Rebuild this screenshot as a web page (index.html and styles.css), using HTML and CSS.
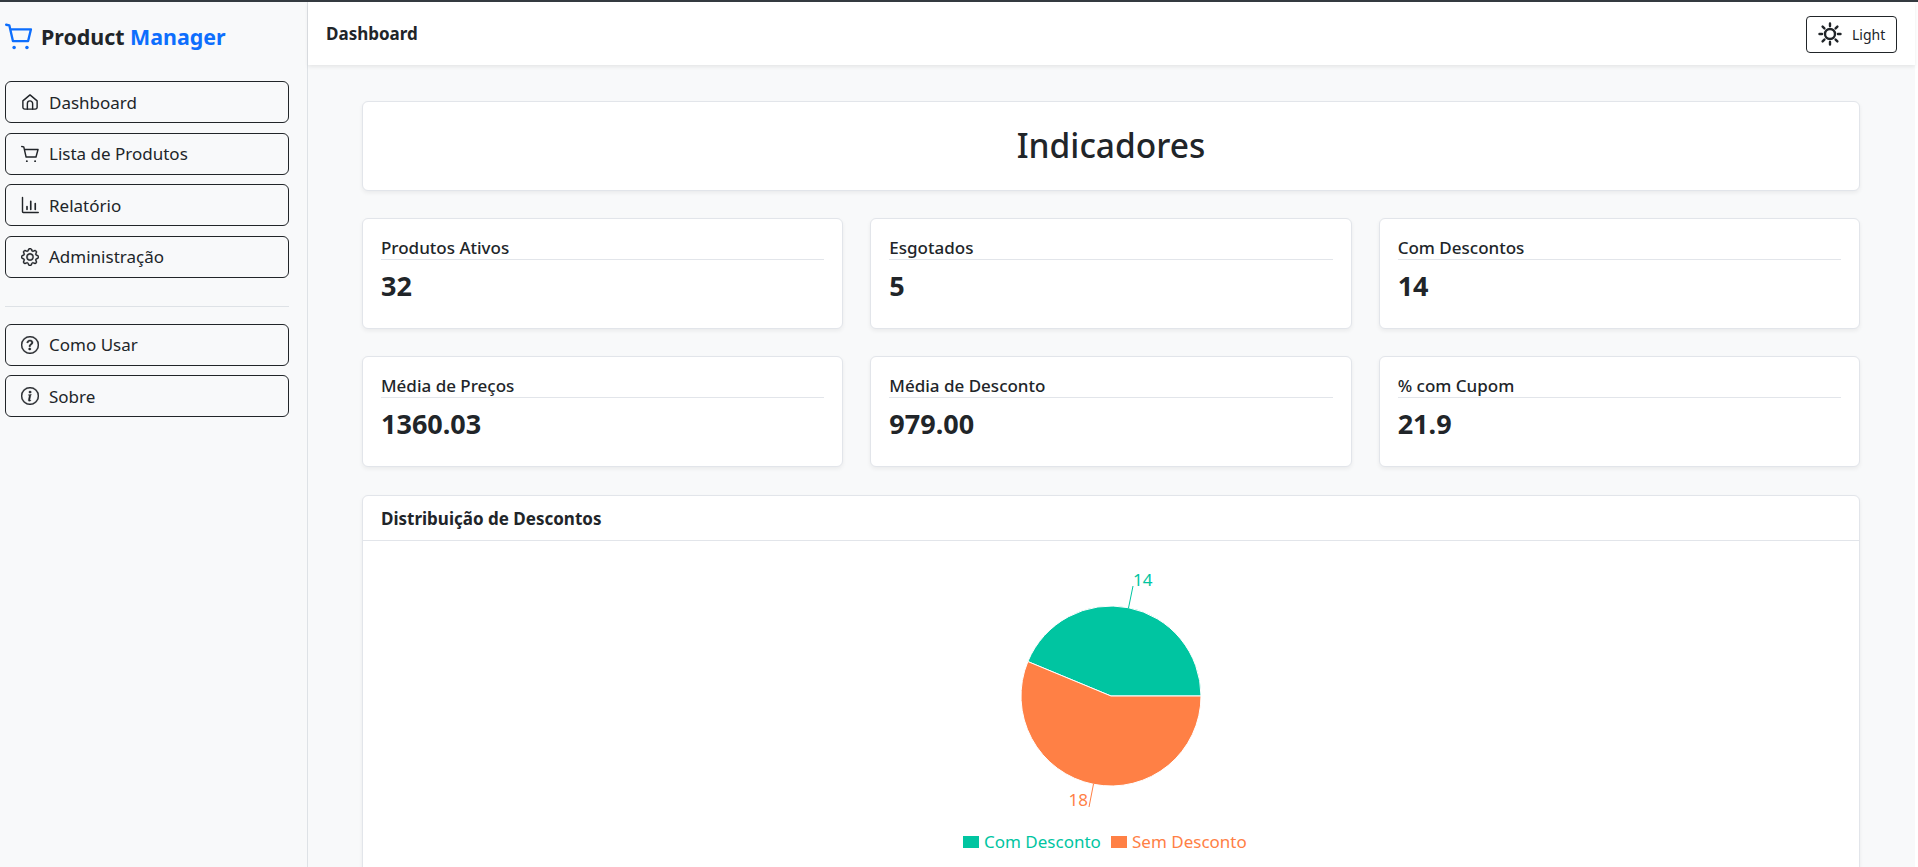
FILE: index.html
```html
<!DOCTYPE html>
<html lang="pt-BR">
    <head>
        <meta charset="UTF-8">
        <title>Product Manager</title>
        <link rel="stylesheet" href="styles.css">
    </head>
    <body>
        <div class="layout">
            <aside class="sidebar">
                <div class="brand">
                    <svg class="brand-icon" viewBox="0 0 24 24"><path d="M1 1.5 3.7 2 6.8 15.5H19.8L22.2 5.5H4.6"/><circle class="dot" cx="7.8" cy="21" r="1.5"/><circle class="dot" cx="18.8" cy="21" r="1.5"/></svg>
                    <span>Product <span class="brand-accent">Manager</span></span>
                </div>
                <nav class="nav-group">
                    <a class="nav-btn">
                        <svg class="nav-icon" viewBox="0 0 24 24"><path d="M2.5 10.5 12 2.5l9.5 8V19a2.5 2.5 0 0 1-2.5 2.5H5A2.5 2.5 0 0 1 2.5 19Z"/><path d="M8.5 21.5V14a3.5 3.5 0 0 1 7 0v7.5"/></svg>
                        Dashboard
                    </a>
                    <a class="nav-btn">
                        <svg class="nav-icon" viewBox="0 0 24 24"><path d="M1 2 3.7 2.5 6.8 16H20L22.7 6H4.6"/><circle class="dot" cx="7.8" cy="21.5" r="1.3"/><circle class="dot" cx="18.8" cy="21.5" r="1.3"/></svg>
                        Lista de Produtos
                    </a>
                    <a class="nav-btn">
                        <svg class="nav-icon" viewBox="0 0 24 24"><path d="M2 2v19a1 1 0 0 0 1 1h20"/><path d="M8 14v4M13 7v11M19 10v8" stroke-width="2.2"/></svg>
                        Relatório
                    </a>
                    <a class="nav-btn">
                        <svg class="nav-icon filled" viewBox="0 0 16 16"><path d="M8 4.754a3.246 3.246 0 1 0 0 6.492 3.246 3.246 0 0 0 0-6.492zM5.754 8a2.246 2.246 0 1 1 4.492 0 2.246 2.246 0 0 1-4.492 0z"/><path d="M9.796 1.343c-.527-1.79-3.065-1.79-3.592 0l-.094.319a.873.873 0 0 1-1.255.52l-.292-.16c-1.64-.892-3.433.902-2.54 2.541l.159.292a.873.873 0 0 1-.52 1.255l-.319.094c-1.79.527-1.79 3.065 0 3.592l.319.094a.873.873 0 0 1 .52 1.255l-.16.292c-.892 1.64.901 3.434 2.541 2.54l.292-.159a.873.873 0 0 1 1.255.52l.094.319c.527 1.79 3.065 1.79 3.592 0l.094-.319a.873.873 0 0 1 1.255-.52l.292.16c1.64.893 3.434-.902 2.54-2.541l-.159-.292a.873.873 0 0 1 .52-1.255l.319-.094c1.79-.527 1.79-3.065 0-3.592l-.319-.094a.873.873 0 0 1-.52-1.255l.16-.292c.893-1.64-.902-3.433-2.541-2.54l-.292.159a.873.873 0 0 1-1.255-.52l-.094-.319zm-2.633.283c.246-.835 1.428-.835 1.674 0l.094.319a1.873 1.873 0 0 0 2.693 1.115l.291-.16c.764-.415 1.6.42 1.184 1.185l-.159.292a1.873 1.873 0 0 0 1.116 2.692l.318.094c.835.246.835 1.428 0 1.674l-.319.094a1.873 1.873 0 0 0-1.115 2.693l.16.291c.415.764-.42 1.6-1.185 1.184l-.291-.159a1.873 1.873 0 0 0-2.693 1.116l-.094.318c-.246.835-1.428.835-1.674 0l-.094-.319a1.873 1.873 0 0 0-2.692-1.115l-.292.16c-.764.415-1.6-.42-1.184-1.185l.159-.291A1.873 1.873 0 0 0 1.945 8.93l-.319-.094c-.835-.246-.835-1.428 0-1.674l.319-.094A1.873 1.873 0 0 0 3.06 4.377l-.16-.292c-.415-.764.42-1.6 1.185-1.184l.292.159a1.873 1.873 0 0 0 2.692-1.115l.094-.319z"/></svg>
                        Administração
                    </a>
                </nav>
                <hr class="nav-divider">
                <nav class="nav-group">
                    <a class="nav-btn">
                        <svg class="nav-icon filled" viewBox="0 0 16 16"><path d="M8 15A7 7 0 1 1 8 1a7 7 0 0 1 0 14zm0 1A8 8 0 1 0 8 0a8 8 0 0 0 0 16z"/><path d="M5.255 5.786a.237.237 0 0 0 .241.247h.825c.138 0 .248-.113.266-.25.09-.656.54-1.134 1.342-1.134.686 0 1.314.343 1.314 1.168 0 .635-.374.927-.965 1.371-.673.489-1.206 1.06-1.168 1.987l.003.217a.25.25 0 0 0 .25.246h.811a.25.25 0 0 0 .25-.25v-.105c0-.718.273-.927 1.01-1.486.609-.463 1.244-.977 1.244-2.056 0-1.511-1.276-2.241-2.673-2.241-1.267 0-2.655.59-2.75 2.286zm1.557 5.763c0 .533.425.927 1.01.927.609 0 1.028-.394 1.028-.927 0-.552-.42-.94-1.029-.94-.584 0-1.009.388-1.009.94z"/></svg>
                        Como Usar
                    </a>
                    <a class="nav-btn">
                        <svg class="nav-icon filled" viewBox="0 0 16 16"><path d="M8 15A7 7 0 1 1 8 1a7 7 0 0 1 0 14zm0 1A8 8 0 1 0 8 0a8 8 0 0 0 0 16z"/><path d="m8.93 6.588-2.29.287-.082.38.45.083c.294.07.352.176.288.469l-.738 3.468c-.194.897.105 1.319.808 1.319.545 0 1.178-.252 1.465-.598l.088-.416c-.2.176-.492.246-.686.246-.275 0-.375-.193-.304-.533L8.93 6.588zM9 4.5a1 1 0 1 1-2 0 1 1 0 0 1 2 0z"/></svg>
                        Sobre
                    </a>
                </nav>
            </aside>
            <div class="content">
                <header class="topbar">
                    <span class="topbar-title">Dashboard</span>
                    <button class="theme-btn">
                        <svg class="theme-icon" viewBox="0 0 24 24"><circle cx="12" cy="12" r="5"/><path d="M12 1.5v2.5M12 20v2.5M1.5 12H4M20 12h2.5M4.6 4.6l1.8 1.8M17.6 17.6l1.8 1.8M4.6 19.4l1.8-1.8M17.6 6.4l1.8-1.8"/></svg>
                        Light
                    </button>
                </header>
                <main class="main">
                    <section class="card page-title">
                        <h1>Indicadores</h1>
                    </section>
                    <section class="stats">
                        <div class="card stat">
                            <div class="stat-label">Produtos Ativos</div>
                            <div class="stat-value">32</div>
                        </div>
                        <div class="card stat">
                            <div class="stat-label">Esgotados</div>
                            <div class="stat-value">5</div>
                        </div>
                        <div class="card stat">
                            <div class="stat-label">Com Descontos</div>
                            <div class="stat-value">14</div>
                        </div>
                        <div class="card stat">
                            <div class="stat-label">Média de Preços</div>
                            <div class="stat-value">1360.03</div>
                        </div>
                        <div class="card stat">
                            <div class="stat-label">Média de Desconto</div>
                            <div class="stat-value">979.00</div>
                        </div>
                        <div class="card stat">
                            <div class="stat-label">% com Cupom</div>
                            <div class="stat-value">21.9</div>
                        </div>
                    </section>
                    <section class="card chart-card">
                        <div class="chart-head">Distribuição de Descontos</div>
                        <div class="chart-body">
                            <svg class="pie" width="400" height="330" viewBox="0 -20 400 330">
                                <path d="M200 125 L290 125 A90 90 0 0 0 116.85 90.56 Z" fill="#00c5a1" stroke="#fff"/>
                                <path d="M200 125 L116.85 90.56 A90 90 0 1 0 290 125 Z" fill="#ff8045" stroke="#fff"/>
                                <path d="M217.5 37 L222 15" fill="none" stroke="#00c5a1"/>
                                <path d="M182.5 213 L178 236" fill="none" stroke="#ff8045"/>
                                <text x="222" y="15" class="pie-label" fill="#00c5a1">14</text>
                                <text x="177" y="235" class="pie-label" fill="#ff8045" text-anchor="end">18</text>
                                <rect x="52" y="265" width="16" height="12" fill="#00c5a1"/>
                                <text x="73" y="277" class="pie-label" fill="#00c5a1">Com Desconto</text>
                                <rect x="200" y="265" width="16" height="12" fill="#ff8045"/>
                                <text x="221" y="277" class="pie-label" fill="#ff8045">Sem Desconto</text>
                            </svg>
                        </div>
                    </section>
                </main>
            </div>
        </div>
    </body>
</html>
```

FILE: styles.css
```css
html, body {
    height: 100%;
}
body {
    margin: 0;
    overflow: hidden;
    background: #fff;
    color: #212529;
    font-family: "Noto Sans", "Open Sans", sans-serif;
    font-size: 16px;
    border-top: 2px solid #343a40;
    box-sizing: border-box;
}
.layout {
    display: flex;
    height: 100%;
    margin-right: 3px;
    background: #f8f9fa;
}
.sidebar {
    width: 308px;
    flex: none;
    box-sizing: border-box;
    padding: 0 18px 0 5px;
    border-right: 1px solid #dee2e6;
    background: #f8f9fa;
}
.brand {
    display: flex;
    align-items: center;
    gap: 8px;
    height: 69px;
    font-size: 21.4px;
    font-weight: 700;
}
.brand-icon {
    width: 28px;
    height: 28px;
    flex: none;
    color: #0d6efd;
    fill: none;
    stroke: currentColor;
    stroke-width: 2;
    stroke-linejoin: round;
    stroke-linecap: round;
}
.brand-accent {
    color: #0d6efd;
}
.nav-group {
    display: flex;
    flex-direction: column;
    gap: 9.6px;
    margin-top: 10px;
}
.nav-btn {
    display: flex;
    align-items: center;
    gap: 10px;
    height: 42px;
    box-sizing: border-box;
    padding: 0 15px;
    border: 1px solid #212529;
    border-radius: 6px;
    font-size: 17px;
}
.nav-icon {
    width: 18px;
    height: 18px;
    flex: none;
    fill: none;
    stroke: currentColor;
    stroke-width: 1.9;
    stroke-linecap: round;
    stroke-linejoin: round;
}
.nav-icon.filled {
    fill: currentColor;
    stroke-width: .35;
}
.dot {
    fill: currentColor;
    stroke: none;
}
.nav-divider {
    height: 1px;
    border: 0;
    background: #dee2e6;
    margin: 28px 0 17px;
}
.content {
    flex: 1;
    min-width: 0;
}
.topbar {
    display: flex;
    align-items: center;
    justify-content: space-between;
    height: 63px;
    box-sizing: border-box;
    padding: 0 18px;
    background: #fff;
    box-shadow: 0 2px 4px rgba(0, 0, 0, .08);
}
.topbar-title {
    font-size: 17px;
    font-weight: 700;
}
.theme-btn {
    display: flex;
    align-items: center;
    gap: 10px;
    width: 91px;
    height: 37px;
    padding: 0 11px;
    margin-top: 1px;
    background: #fff;
    color: #212529;
    border: 1px solid #212529;
    border-radius: 4px;
    font: 14px "Noto Sans", "Open Sans", sans-serif;
}
.theme-icon {
    width: 24px;
    height: 24px;
    flex: none;
    fill: none;
    stroke: currentColor;
    stroke-width: 2.4;
    stroke-linecap: round;
}
.main {
    padding: 36px 55px 0 54px;
}
.card {
    background: #fff;
    border: 1px solid #e2e5ea;
    border-radius: 6px;
    box-shadow: 0 2px 4px rgba(0, 0, 0, .06);
    box-sizing: border-box;
}
.page-title {
    height: 90px;
    padding-bottom: 3px;
    display: flex;
    align-items: center;
    justify-content: center;
}
.page-title h1 {
    margin: 0;
    font-size: 33.5px;
    font-weight: 500;
}
.stats {
    display: grid;
    grid-template-columns: repeat(3, 1fr);
    row-gap: 27px;
    column-gap: 27px;
    margin-top: 27px;
}
.stat {
    height: 111px;
    padding: 18px 18px 0;
}
.stat-label {
    font-size: 17px;
    font-weight: 500;
    line-height: 22px;
    border-bottom: 1px solid #e2e5ea;
}
.stat-value {
    font-size: 27px;
    font-weight: 700;
    line-height: 36px;
    margin-top: 8px;
}
.chart-card {
    margin-top: 28px;
}
.chart-head {
    height: 45px;
    box-sizing: border-box;
    padding: 0 18px;
    display: flex;
    align-items: center;
    font-size: 17px;
    font-weight: 700;
    border-bottom: 1px solid #e2e5ea;
}
.chart-body {
    display: flex;
    justify-content: center;
}
.pie {
    margin-top: 10px;
}
.pie-label {
    font-family: "Noto Sans", "Open Sans", sans-serif;
    font-size: 17px;
}
```
